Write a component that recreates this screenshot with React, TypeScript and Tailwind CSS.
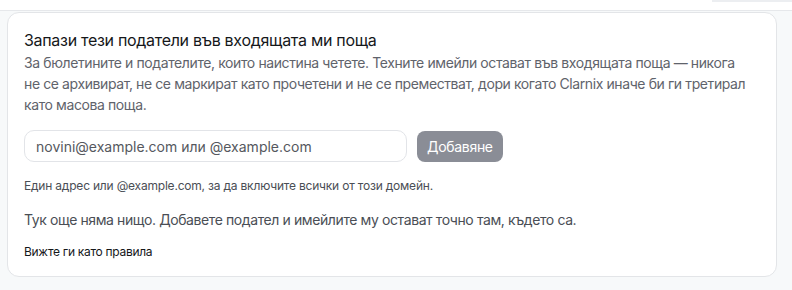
export default function App() {
  return (
    <div
      className="w-[792px] h-[290px] bg-[#f7f9fa] overflow-hidden"
      style={{ fontFamily: 'Inter, "Noto Sans", sans-serif' }}
    >
      {/* strip from the section above */}
      <div className="h-[11px] bg-white border-b border-[#e6e8eb] relative">
        <div className="absolute right-0 top-0 w-[80px] h-[2px] bg-[#eceef1]" />
      </div>

      <div className="pl-[7px] pr-[15px] pt-[1px]">
        <div className="bg-white border border-[#e3e5e8] rounded-[12px] px-[16px] pt-[16px] pb-[16px]">
          <h2 className="text-[16px] leading-[22px] text-[#15171a] tracking-[-0.3px]">
            Запази тези податели във входящата ми поща
          </h2>
          <p className="mt-[1px] text-[14px] leading-[21px] text-[#5f636b] tracking-[-0.4px]">
            За бюлетините и подателите, които наистина четете. Техните имейли остават във входящата поща — никога
            <br />
            не се архивират, не се маркират като прочетени и не се преместват, дори когато Clarnix иначе би ги третирал
            <br />
            като масова поща.
          </p>

          <div className="flex items-center gap-[10px] mt-[15px]">
            <input
              className="w-[383px] h-[32px] rounded-[10px] border border-[#e2e4e8] px-[11px] text-[14px] text-[#15171a] placeholder:text-[#55585e] outline-none"
              placeholder="novini@example.com или @example.com"
            />
            <button className="h-[31px] px-[10px] rounded-[8px] bg-[#8a8d96] text-white text-[14px] tracking-[-0.3px]">
              Добавяне
            </button>
          </div>

          <p className="mt-[16px] text-[12px] leading-[16px] text-[#4a4e55] tracking-[-0.2px]">
            Един адрес или @example.com, за да включите всички от този домейн.
          </p>

          <p className="mt-[16px] text-[14px] leading-[20px] text-[#4a4e55] tracking-[-0.4px]">
            Тук още няма нищо. Добавете подател и имейлите му остават точно там, където са.
          </p>

          <button className="block mt-[14px] text-[12px] leading-[16px] text-[#15171a] tracking-[-0.3px]">
            Вижте ги като правила
          </button>
        </div>
      </div>
    </div>
  )
}
